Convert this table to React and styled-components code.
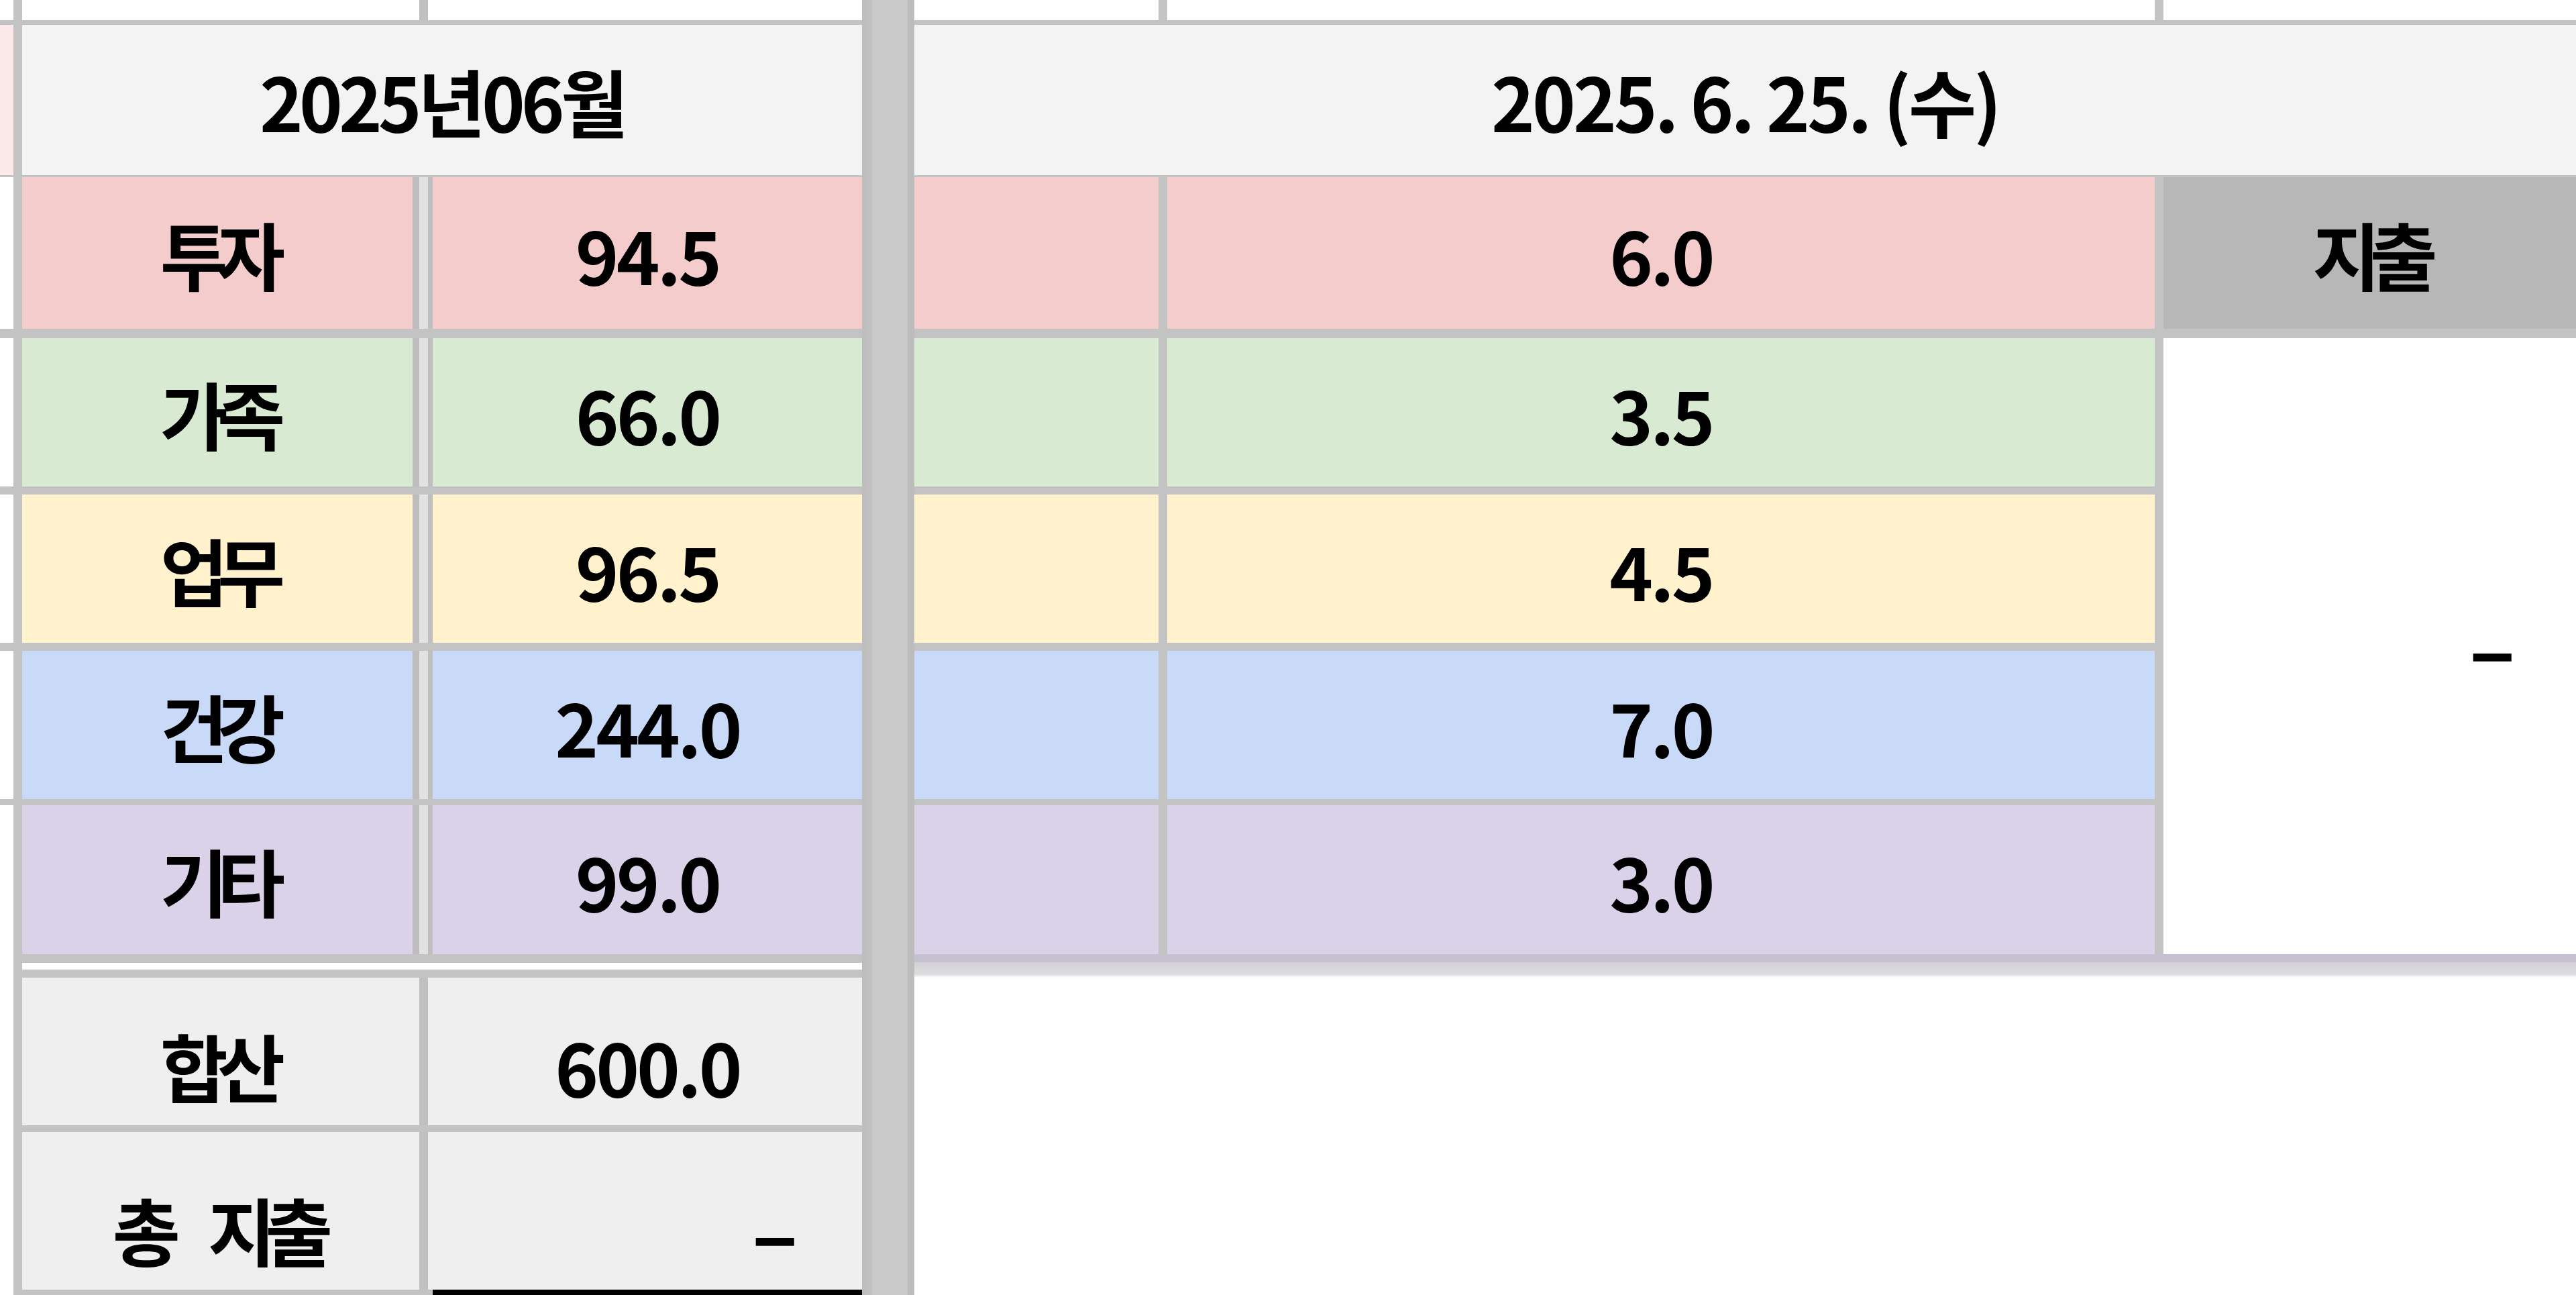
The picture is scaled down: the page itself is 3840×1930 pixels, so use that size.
import React from 'react'
import styled, { createGlobalStyle } from 'styled-components'

const GlobalStyle = createGlobalStyle`
    html, body {
        margin: 0;
        padding: 0;
        background: #fff;
        overflow: hidden;
    }
    body {
        font-family: "Noto Sans CJK KR", "Noto Sans", sans-serif;
        color: #000;
    }
`

// column tracks: strip | line | A | A/B line | B | freeze | C | line | D | line | E
// row tracks follow the zoomed spreadsheet rows, odd ones are grid lines
const Sheet = styled.div`
    display: grid;
    width: 3840px;
    height: 1930px;
    background: #c3c3c3;
    grid-template-columns: 20px 13px 582px 30px 640px 78px 364px 13px 1472px 13px 615px;
    grid-template-rows:
        30px 7px 224px 3px
        226px 14px 221px 12px 221px 12px 221px 9px 222px
        13px 10px 12px
        220px 10px 235px 8px;
`

const Cell = styled.div`
    grid-column: ${p => p.$col};
    grid-row: ${p => p.$row};
    background: ${p => p.$bg || '#fff'};
    display: flex;
    align-items: center;
    justify-content: ${p => p.$align || 'center'};
    padding: ${p => p.$pad || '0'};
    box-sizing: border-box;
    min-width: 0;
    overflow: hidden;
    font-size: 110px;
    font-weight: 700;
    letter-spacing: ${p => (p.$label ? '-16px' : p.$head ? '-6px' : '-4px')};
    word-spacing: ${p => (p.$label ? '48px' : '0')};
    line-height: 1;
    white-space: pre;
`

const Freeze = styled.div`
    grid-column: 6;
    grid-row: 1 / -1;
    background: linear-gradient(
        to right,
        #bdbdbd 0,
        #c2c2c2 15px,
        #c9c9c9 15px,
        #c9c9c9 68px,
        #bcbcbc 68px
    );
`

const Divider = styled.div`
    grid-column: 4;
    grid-row: ${p => p.$row};
    background: ${p =>
        p.$light
            ? `linear-gradient(to right, ${p.$light} 0, ${p.$light} 10px, #c0c0c0 10px, #c0c0c0 23px, ${p.$light} 23px)`
            : 'linear-gradient(to right, #bdbdbd 0, #bdbdbd 10px, #e2e2e2 10px, #e2e2e2 23px, #bfbfbf 23px)'};
`

const BottomArea = styled.div`
    grid-column: 7 / -1;
    grid-row: 14 / -1;
    background: linear-gradient(
        to bottom,
        #c6c1d1 0,
        #c6c1d1 12px,
        #d3d1d9 12px,
        #dcdcdc 30px,
        #fff 35px
    );
`

const Dash = styled.span`
    display: inline-block;
    transform: scaleX(1.9);
`

const rows = [
    { name: '투자', month: '94.5', day: '6.0', bg: '#f4cccc' },
    { name: '가족', month: '66.0', day: '3.5', bg: '#d9ead3' },
    { name: '업무', month: '96.5', day: '4.5', bg: '#fff2cc' },
    { name: '건강', month: '244.0', day: '7.0', bg: '#c9daf8' },
    { name: '기타', month: '99.0', day: '3.0', bg: '#d9d2e9' },
]

export default function App() {
    return (
        <React.Fragment>
            <GlobalStyle />
            <Sheet>
                {/* top partial row */}
                <Cell $col="1" $row="1" />
                <Cell $col="3" $row="1" />
                <Divider $row="1" $light="#fff" />
                <Cell $col="5" $row="1" />
                <Cell $col="7" $row="1" />
                <Cell $col="9" $row="1" />
                <Cell $col="11" $row="1" />

                {/* header */}
                <Cell $col="1" $row="3" $bg="#fbe9e9" />
                <Cell $col="3 / 6" $row="3" $bg="#f3f3f3" $head>2025년06월</Cell>
                <Cell $col="7 / -1" $row="3" $bg="#f3f3f3">2025. 6. 25. (수)</Cell>

                {rows.map((r, i) => {
                    const row = 5 + i * 2
                    return (
                        <React.Fragment key={r.name}>
                            <Cell $col="1" $row={row} />
                            <Cell $col="3" $row={row} $bg={r.bg} $label>{r.name}</Cell>
                            <Divider $row={row} />
                            <Cell $col="5" $row={row} $bg={r.bg}>{r.month}</Cell>
                            <Cell $col="7" $row={row} $bg={r.bg} />
                            <Cell $col="9" $row={row} $bg={r.bg}>{r.day}</Cell>
                        </React.Fragment>
                    )
                })}

                <Cell $col="11" $row="5" $bg="#b7b7b7" $label>지출</Cell>
                <Cell $col="11" $row="7 / 14" $align="flex-end" $pad="0 110px 0 0">
                    <Dash>-</Dash>
                </Cell>

                {/* gap below categories */}
                <Cell $col="1" $row="14 / 17" />
                <Cell $col="3 / 6" $row="15" />
                <BottomArea />

                {/* totals */}
                <Cell $col="1" $row="17 / -1" />
                <Cell $col="3" $row="17" $bg="#efefef" $label $pad="40px 0 0 0">합산</Cell>
                <Divider $row="17" $light="#efefef" />
                <Cell $col="5" $row="17" $bg="#efefef" $pad="40px 0 0 0">600.0</Cell>

                <Cell $col="3" $row="19" $bg="#efefef" $label $pad="52px 0 0 0">총 지출</Cell>
                <Divider $row="19" $light="#efefef" />
                <Cell $col="5" $row="19" $bg="#efefef" $align="flex-end" $pad="58px 115px 0 0">
                    <Dash>-</Dash>
                </Cell>
                <Cell $col="5" $row="20" $bg="#000" />

                <Freeze />
            </Sheet>
        </React.Fragment>
    )
}
